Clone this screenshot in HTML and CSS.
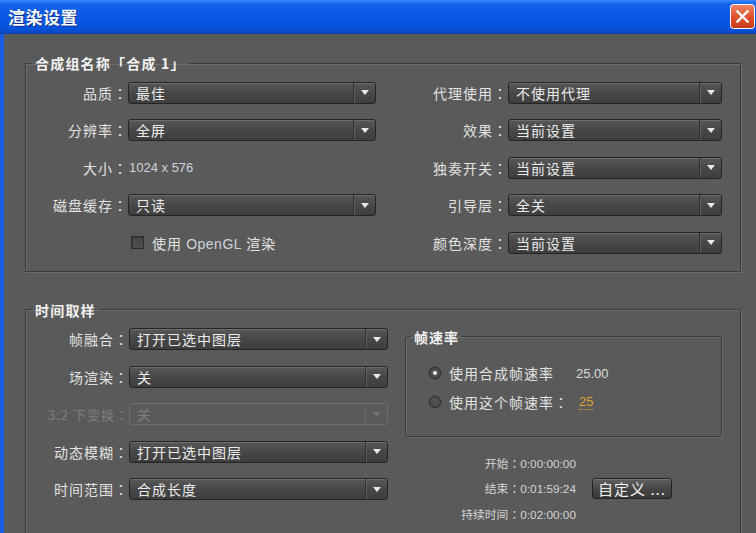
FILE: index.html
```html
<!DOCTYPE html>
<html lang="zh-CN">
<head>
<meta charset="utf-8">
<title>渲染设置</title>
<link rel="stylesheet" href="styles.css">
</head>
<body>
<div class="window">
  <div class="titlebar">
    <span class="title">渲染设置</span>
    <span class="close">
      <svg width="25" height="25" viewBox="0 0 25 25">
        <defs>
          <linearGradient id="cg" x1="0" y1="0" x2="0" y2="1">
            <stop offset="0" stop-color="#f08a6a"/>
            <stop offset="0.5" stop-color="#e0532e"/>
            <stop offset="1" stop-color="#c83c1c"/>
          </linearGradient>
        </defs>
        <rect x="0.5" y="0.5" width="24" height="24" rx="3" fill="url(#cg)" stroke="#ffffff" stroke-width="1"/>
        <path d="M7.5 7.5 L17.5 17.5 M17.5 7.5 L7.5 17.5" stroke="#ffffff" stroke-width="2.4" stroke-linecap="square"/>
      </svg>
    </span>
  </div>
  <div class="frame">
    <div class="client">
      <fieldset class="group g1">
        <legend>合成组名称「合成 1」</legend>
        <div class="grid1">
          <span class="lbl">品质<span class="c" lang="zh-Hant">：</span></span>
          <div class="select"><span class="val">最佳</span><span class="arrow"></span></div>
          <span class="lbl">代理使用<span class="c" lang="zh-Hant">：</span></span>
          <div class="select"><span class="val">不使用代理</span><span class="arrow"></span></div>

          <span class="lbl">分辨率<span class="c" lang="zh-Hant">：</span></span>
          <div class="select"><span class="val">全屏</span><span class="arrow"></span></div>
          <span class="lbl">效果<span class="c" lang="zh-Hant">：</span></span>
          <div class="select"><span class="val">当前设置</span><span class="arrow"></span></div>

          <span class="lbl">大小<span class="c" lang="zh-Hant">：</span></span>
          <span class="size">1024 x 576</span>
          <span class="lbl">独奏开关<span class="c" lang="zh-Hant">：</span></span>
          <div class="select"><span class="val">当前设置</span><span class="arrow"></span></div>

          <span class="lbl">磁盘缓存<span class="c" lang="zh-Hant">：</span></span>
          <div class="select"><span class="val">只读</span><span class="arrow"></span></div>
          <span class="lbl">引导层<span class="c" lang="zh-Hant">：</span></span>
          <div class="select"><span class="val">全关</span><span class="arrow"></span></div>

          <span class="lbl"></span>
          <span class="check"><span class="box"></span><span class="ctext">使用 <span class="latin">OpenGL</span> 渲染</span></span>
          <span class="lbl">颜色深度<span class="c" lang="zh-Hant">：</span></span>
          <div class="select"><span class="val">当前设置</span><span class="arrow"></span></div>
        </div>
      </fieldset>

      <fieldset class="group g2">
        <legend>时间取样</legend>
        <div class="g2body">
          <div class="grid2">
            <span class="lbl">帧融合<span class="c" lang="zh-Hant">：</span></span>
            <div class="select"><span class="val">打开已选中图层</span><span class="arrow"></span></div>
            <span class="lbl">场渲染<span class="c" lang="zh-Hant">：</span></span>
            <div class="select"><span class="val">关</span><span class="arrow"></span></div>
            <span class="lbl dis">3:2 下变换<span class="c" lang="zh-Hant">：</span></span>
            <div class="select disabled"><span class="val">关</span><span class="arrow"></span></div>
            <span class="lbl">动态模糊<span class="c" lang="zh-Hant">：</span></span>
            <div class="select"><span class="val">打开已选中图层</span><span class="arrow"></span></div>
            <span class="lbl">时间范围<span class="c" lang="zh-Hant">：</span></span>
            <div class="select"><span class="val">合成长度</span><span class="arrow"></span></div>
          </div>
          <div class="rightcol">
            <fieldset class="sub">
              <legend>帧速率</legend>
              <div class="radio-row"><span class="radio on"></span><span class="rtext">使用合成帧速率</span><span class="num">25.00</span></div>
              <div class="radio-row"><span class="radio"></span><span class="rtext">使用这个帧速率<span class="c" lang="zh-Hant">：</span></span><span class="num link">25</span></div>
            </fieldset>
            <div class="timeinfo">
              <div class="times">
                <div>开始<span class="c" lang="zh-Hant">：</span>0:00:00:00</div>
                <div>结束<span class="c" lang="zh-Hant">：</span>0:01:59:24</div>
                <div>持续时间<span class="c" lang="zh-Hant">：</span>0:02:00:00</div>
              </div>
              <button class="btn">自定义 ...</button>
            </div>
          </div>
        </div>
      </fieldset>
    </div>
  </div>
</div>
</body>
</html>
```
FILE: styles.css
```css
* { box-sizing: border-box; }
html, body {
  margin: 0;
  padding: 0;
  width: 756px;
  height: 533px;
  overflow: hidden;
  background: #5a5a5a;
  font-family: "Noto Sans CJK SC", sans-serif;
  color: #e4e4e4;
}
.window {
  width: 756px;
  height: 533px;
  display: flex;
  flex-direction: column;
}
.titlebar {
  height: 34px;
  flex: none;
  display: flex;
  align-items: center;
  justify-content: space-between;
  padding: 0 1px 0 8px;
  background: linear-gradient(#3b86f7 0%, #1565ee 12%, #0a58e6 45%, #0552dd 85%, #0a49c4 100%);
  border-bottom: 1px solid #0b3fa8;
}
.title {
  color: #ffffff;
  font-weight: bold;
  font-size: 17px;
  letter-spacing: 0.5px;
  text-shadow: 1px 1px 0 #0a2f8a;
  line-height: 20px;
}
.close {
  display: flex;
  width: 25px;
  height: 25px;
}
.frame {
  flex: 1;
  display: flex;
  border-left: 4px solid #1a5de0;
  background: #5a5a5a;
}
.client {
  flex: 1;
  padding: 19px 15px 0 21px;
  display: flex;
  flex-direction: column;
}
.group {
  margin: 0;
  padding: 0;
  border: 1px solid #3c3c3c;
  box-shadow: inset 1px 1px 0 #6c6c6c, 1px 1px 0 #6c6c6c;
  min-width: 0;
}
.group > legend {
  margin-left: 6px;
  padding: 0 3px;
  font-weight: bold;
  font-size: 14px;
  letter-spacing: 1.2px;
  line-height: 20px;
  color: #f2f2f2;
}
.c {
  font-family: "Noto Sans CJK TC", sans-serif;
}
.grid1 {
  display: grid;
  grid-template-columns: 102px 248px 132px 214px;
  grid-auto-rows: 37.5px;
  align-items: center;
  margin-top: 1px;
  padding-bottom: 9px;
}
.lbl {
  text-align: right;
  font-size: 14px;
  letter-spacing: 1px;
  white-space: nowrap;
  padding-right: 0;
  color: #e2e2e2;
}
.lbl.dis { color: #7d7d7d; font-size: 13px; }
.select {
  height: 22px;
  display: flex;
  align-items: stretch;
  border: 1px solid #242424;
  border-radius: 3px;
  background: linear-gradient(#585858, #474747 50%, #3e3e3e);
  box-shadow: inset 0 1px 0 #6e6e6e;
}
.select .val {
  flex: 1;
  font-size: 14px;
  letter-spacing: 1px;
  line-height: 20px;
  padding-left: 7px;
  color: #ececec;
  white-space: nowrap;
}
.select .arrow {
  width: 22px;
  flex: none;
  border-left: 1px solid #303030;
  box-shadow: inset 1px 0 0 #5e5e5e;
  display: flex;
  align-items: center;
  justify-content: center;
}
.select .arrow::after {
  content: "";
  width: 0;
  height: 0;
  border-left: 4px solid transparent;
  border-right: 4px solid transparent;
  border-top: 5px solid #e8e8e8;
}
.select.disabled {
  background: #5a5a5a;
  border-color: #6e6e6e;
  box-shadow: none;
}
.select.disabled .val { color: #7d7d7d; }
.select.disabled .arrow { border-left-color: #6a6a6a; box-shadow: none; }
.select.disabled .arrow::after { border-top-color: #747474; }
.size {
  font-family: "Liberation Sans", sans-serif;
  font-size: 13px;
  color: #cdd3de;
  padding-left: 1px;
}
.check {
  display: flex;
  align-items: center;
  padding-left: 3px;
}
.check .box {
  width: 13px;
  height: 13px;
  border: 1px solid #2c2c2c;
  background: linear-gradient(#444, #505050);
  box-shadow: inset 1px 1px 0 #3a3a3a;
  margin-right: 8px;
}
.ctext {
  font-size: 14px;
  letter-spacing: 1px;
  color: #e2e2e2;
}
.latin {
  font-family: "Liberation Sans", sans-serif;
  color: #cdd3de;
  letter-spacing: 0.5px;
}
.g2 {
  margin-top: 28px;
  flex: 1;
  border-bottom: none;
}
.g2body {
  display: flex;
  margin-top: 1px;
}
.grid2 {
  display: grid;
  grid-template-columns: 103px 259px;
  grid-auto-rows: 37.5px;
  align-items: center;
}
.rightcol {
  margin-left: 17px;
  width: 317px;
  display: flex;
  flex-direction: column;
}
.sub {
  margin: 7px 0 0 0;
  padding: 13px 0 19px 0;
  border: 1px solid #3c3c3c;
  border-radius: 3px;
  box-shadow: inset 1px 1px 0 #6a6a6a, 1px 1px 0 #6a6a6a;
}
.sub > legend {
  margin-left: 5px;
  padding: 0 3px;
  font-weight: bold;
  font-size: 14px;
  letter-spacing: 1px;
  line-height: 18px;
  color: #f2f2f2;
}
.radio-row {
  height: 29px;
  display: flex;
  align-items: center;
  padding-left: 23px;
}
.radio {
  width: 12px;
  height: 12px;
  border-radius: 50%;
  border: 1px solid #2e2e2e;
  background: radial-gradient(circle at 50% 40%, #555, #464646);
  box-shadow: 0 0 0 1px #505050;
  margin-right: 8px;
  display: flex;
  align-items: center;
  justify-content: center;
}
.radio.on::after {
  content: "";
  width: 4px;
  height: 4px;
  border-radius: 50%;
  background: #f4f4f4;
}
.rtext {
  font-size: 14px;
  letter-spacing: 1px;
  color: #e2e2e2;
  white-space: nowrap;
}
.num {
  font-family: "Liberation Sans", sans-serif;
  font-size: 13px;
  color: #dcdcdc;
  margin-left: 22px;
}
.num.link {
  margin-left: 10px;
  color: #dfa52a;
  border-bottom: 1px dotted #dfa52a;
  line-height: 14px;
}
.timeinfo {
  display: flex;
  align-items: center;
  margin-top: 14px;
}
.times {
  width: 171px;
  text-align: right;
  font-size: 11.8px;
  line-height: 24.5px;
  color: #d4d4d4;
}
.times div { font-family: "Liberation Sans", "Noto Sans CJK SC", sans-serif; }
.btn {
  margin-left: 16px;
  width: 80px;
  height: 21px;
  padding: 0;
  border: 1px solid #222;
  border-radius: 3px;
  background: linear-gradient(#606060, #474747 50%, #3a3a3a);
  box-shadow: inset 0 1px 0 #767676;
  color: #f0f0f0;
  font-family: "Noto Sans CJK SC", sans-serif;
  font-size: 15px;
  letter-spacing: 1px;
  line-height: 19px;
}
```
